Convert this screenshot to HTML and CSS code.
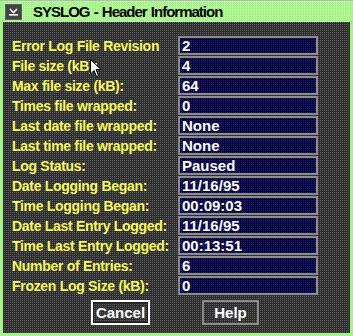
FILE: index.html
```html
<!DOCTYPE html>
<html>

<head>
  <title>SYSLOG - Header Information</title>
  <link rel="stylesheet" href="styles.css">
</head>

<body>
  <div class="window">
    <div class="titlebar">
      <span class="sysmenu">
        <svg width="11" height="8" viewBox="0 0 11 8">
          <path d="M2 1 L5.5 4.5 L9 1" fill="none" stroke="#ffffff" stroke-width="1.6"/>
          <rect x="1" y="6" width="9" height="1.6" fill="#ffffff"/>
        </svg>
      </span>
      <span class="title">SYSLOG - Header Information</span>
    </div>

    <div class="content">
      <div class="rows">
        <div class="row"><span class="label">Error Log File Revision</span><span class="field">2</span></div>
        <div class="row"><span class="label">File size (kB):</span><span class="field">4</span></div>
        <div class="row"><span class="label">Max file size (kB):</span><span class="field">64</span></div>
        <div class="row"><span class="label">Times file wrapped:</span><span class="field">0</span></div>
        <div class="row"><span class="label">Last date file wrapped:</span><span class="field">None</span></div>
        <div class="row"><span class="label">Last time file wrapped:</span><span class="field">None</span></div>
        <div class="row"><span class="label">Log Status:</span><span class="field">Paused</span></div>
        <div class="row"><span class="label">Date Logging Began:</span><span class="field">11/16/95</span></div>
        <div class="row"><span class="label">Time Logging Began:</span><span class="field">00:09:03</span></div>
        <div class="row"><span class="label">Date Last Entry Logged:</span><span class="field">11/16/95</span></div>
        <div class="row"><span class="label">Time Last Entry Logged:</span><span class="field">00:13:51</span></div>
        <div class="row"><span class="label">Number of Entries:</span><span class="field">6</span></div>
        <div class="row"><span class="label">Frozen Log Size (kB):</span><span class="field">0</span></div>
      </div>

      <div class="buttons">
        <button class="btn btn-default">Cancel</button>
        <button class="btn">Help</button>
      </div>

      <!-- mouse pointer sitting over the "kB" label -->
      <svg class="pointer" width="12" height="19" viewBox="0 0 12 19">
        <path d="M0.5 0.5 L0.5 15 L4 11.5 L6.5 17.5 L8.5 16.5 L6 10.5 L11 10.5 Z" fill="#ffffff" stroke="#000000" stroke-width="1"/>
      </svg>
    </div>
  </div>
</body>

</html>
```

FILE: styles.css
```css
body {
  margin: 0;
  font-family: "Liberation Sans", Arial, sans-serif;
  font-weight: bold;
}

.window {
  width: 353px;
  height: 336px;
  box-sizing: border-box;
  background-color: #a4f488;
  border-top: 1px solid #b8b8b8;
  padding: 0 3px 3px 3px;
  display: flex;
  flex-direction: column;
}

.titlebar {
  height: 21px;
  display: flex;
  align-items: center;
  background-color: #a4f488;
  background-image: conic-gradient(#c4ffb0 25%, transparent 0);
  background-size: 2px 2px;
}

.sysmenu {
  width: 17px;
  height: 16px;
  margin-left: 2px;
  background-color: #444444;
  border: 1px solid #5c5c5c;
  box-sizing: border-box;
  display: flex;
  align-items: center;
  justify-content: center;
}

.title {
  margin-left: 11px;
  font-size: 15px;
  letter-spacing: -1px;
  word-spacing: 1px;
  color: #000000;
}

.content {
  flex: 1;
  position: relative;
  background-color: #2e2e2e;
  background-image: conic-gradient(#5e5e5e 25%, transparent 0);
  background-size: 2px 2px;
  padding: 14px 0 0 9px;
}

.rows {
  display: flex;
  flex-direction: column;
  gap: 1px;
}

.row {
  display: flex;
  align-items: center;
  height: 19px;
}

.label {
  width: 166px;
  font-size: 14px;
  letter-spacing: -0.3px;
  color: #fcfc50;
}

.field {
  width: 140px;
  height: 19px;
  box-sizing: border-box;
  border: 2px solid #8c8c8c;
  background-color: #06063c;
  background-image: conic-gradient(#1c1c70 25%, transparent 0);
  background-size: 2px 2px;
  color: #ffffff;
  font-size: 15px;
  line-height: 15px;
  padding-left: 2px;
}

.buttons {
  display: flex;
  justify-content: center;
  gap: 52px;
  margin-top: 5px;
  margin-left: -12px;
}

.btn {
  height: 25px;
  width: 57px;
  padding: 0;
  background: transparent;
  border: 2px solid #8c8c8c;
  color: #ffffff;
  font-family: "Liberation Sans", Arial, sans-serif;
  font-weight: bold;
  font-size: 15px;
}

.btn-default {
  width: 59px;
  border-color: #ffffff;
  box-shadow: inset 0 0 0 1px #1a1a1a;
}

.pointer {
  position: absolute;
  left: 87px;
  top: 37px;
}
```
